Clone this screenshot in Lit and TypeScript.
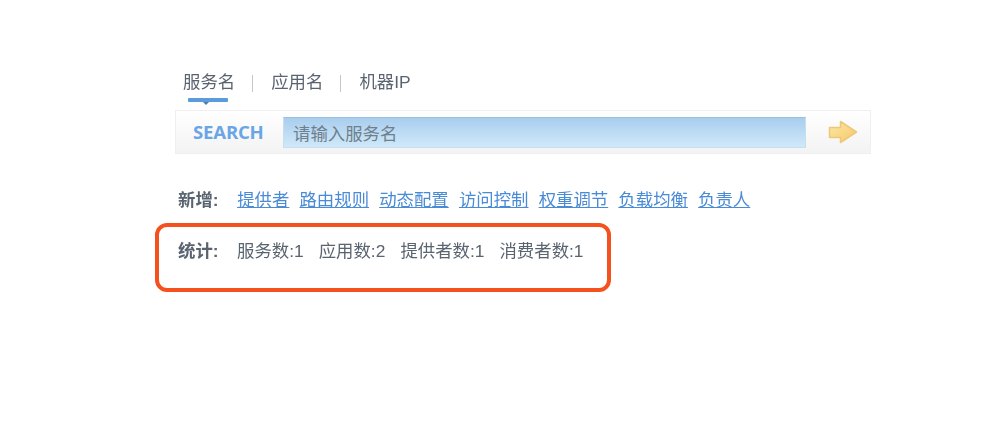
import { LitElement, html, css } from "lit";
import { customElement } from "lit/decorators.js";

const links = ["提供者", "路由规则", "动态配置", "访问控制", "权重调节", "负载均衡", "负责人"];
const stats = ["服务数:1", "应用数:2", "提供者数:1", "消费者数:1"];

@customElement("app-root")
export class AppRoot extends LitElement {
  static styles = css`
    :host {
      display: block;
      width: 1000px;
      height: 440px;
      background: #fff;
      overflow: hidden;
      font-family: "Liberation Sans", "Noto Sans CJK SC", sans-serif;
      font-size: 17.4px;
      color: #5a6470;
    }
    .page {
      display: flex;
      flex-direction: column;
      padding: 71px 0 0 175px;
      filter: blur(0.35px);
    }
    .tabs {
      display: flex;
      align-items: flex-start;
      height: 39px;
      padding-left: 8px;
      line-height: 22px;
    }
    .tab {
      position: relative;
      height: 30px;
    }
    .tab.active::before {
      content: "";
      position: absolute;
      left: 5px;
      right: 7px;
      top: 27px;
      height: 4px;
      border-radius: 1px;
      background: #5b9bdc;
    }
    .tab.active::after {
      content: "";
      position: absolute;
      left: 20px;
      top: 31px;
      border: 3px solid transparent;
      border-bottom: 0;
      border-top-color: #4a7fb5;
    }
    .sep {
      width: 1px;
      height: 17px;
      margin: 4px 18px 0 17px;
      background: #c4c7ca;
    }
    .search {
      box-sizing: border-box;
      width: 696px;
      height: 44px;
      display: flex;
      align-items: center;
      border: 1px solid #efefef;
      background: linear-gradient(#ffffff, #f3f3f3);
    }
    .label {
      width: 107px;
      box-sizing: border-box;
      padding: 0 0 2px 17px;
      font-size: 18.6px;
      font-weight: bold;
      letter-spacing: -0.2px;
      color: #6aa5e6;
      font-family: "Open Sans", "Liberation Sans", sans-serif;
    }
    .input {
      box-sizing: border-box;
      width: 523px;
      height: 31px;
      padding-left: 9px;
      display: flex;
      align-items: center;
      border: 1px solid #c4e0f0;
      border-top-color: #9cc0de;
      background: linear-gradient(#a9cdee, #d0e9f9);
      color: #6f7f8c;
      font-size: 17.4px;
    }
    .arrow {
      display: block;
      margin-left: 22px;
    }
    .row {
      display: flex;
      line-height: 22px;
    }
    .links {
      margin-top: 35px;
      padding-left: 3px;
      gap: 10.15px;
    }
    .name {
      font-weight: bold;
      width: 49px;
      flex: none;
    }
    a {
      color: #4a8bd6;
      text-decoration: underline;
    }
    .box {
      box-sizing: border-box;
      width: 456px;
      height: 69px;
      margin: 12px 0 0 -20px;
      padding: 13px 0 0 19px;
      border: 4px solid #f4511e;
      border-radius: 12px;
    }
    .stats {
      gap: 15px;
    }
    .stats .name {
      width: 44px;
    }
  `;

  render() {
    return html`
      <div class="page">
        <div class="tabs">
          <div class="tab active">服务名</div>
          <div class="sep"></div>
          <div class="tab">应用名</div>
          <div class="sep"></div>
          <div class="tab">机器IP</div>
        </div>
        <div class="search">
          <div class="label">SEARCH</div>
          <div class="input">请输入服务名</div>
          <svg class="arrow" width="30" height="24" viewBox="0 0 30 24">
            <defs>
              <linearGradient id="g" x1="0" y1="0" x2="1" y2="1">
                <stop offset="0" stop-color="#fbe9a6" />
                <stop offset="1" stop-color="#f6c768" />
              </linearGradient>
            </defs>
            <path
              d="M1.5 7.5H12.5V1.5L28.5 12L12.5 22.5V17.5H1.5Z"
              fill="url(#g)"
              stroke="#eec77a"
              stroke-width="1.5"
              stroke-linejoin="round"
            />
          </svg>
        </div>
        <div class="row links">
          <span class="name">新增:</span>
          ${links.map((l) => html`<a href="#">${l}</a>`)}
        </div>
        <div class="box">
          <div class="row stats">
            <span class="name">统计:</span>
            ${stats.map((s) => html`<span>${s}</span>`)}
          </div>
        </div>
      </div>
    `;
  }
}
